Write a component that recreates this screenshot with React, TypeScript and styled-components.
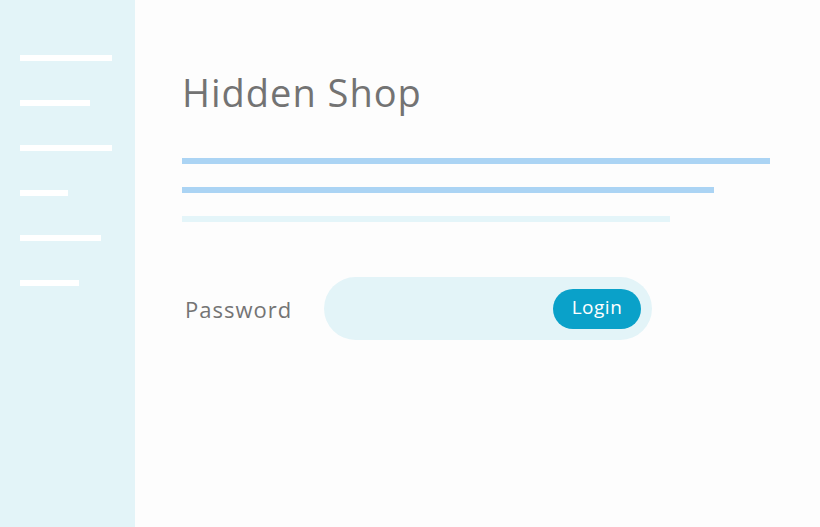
import React from "react";
import styled, { createGlobalStyle } from "styled-components";

const GlobalStyle = createGlobalStyle`
  html, body {
    margin: 0;
    padding: 0;
    background: #fdfdfd;
  }
  body {
    font-family: "Open Sans", "Liberation Sans", sans-serif;
  }
`;

const Page = styled.div`
  display: flex;
  width: 820px;
  height: 527px;
  overflow: hidden;
  background: #fdfdfd;
`;

const Sidebar = styled.nav`
  width: 135px;
  flex-shrink: 0;
  background: #e3f4f8;
  display: flex;
  flex-direction: column;
  gap: 39px;
  padding: 55px 0 0 20px;
  box-sizing: border-box;
`;

const NavLine = styled.div<{ $width: number }>`
  width: ${(p) => p.$width}px;
  height: 6px;
  background: #ffffff;
`;

const Main = styled.main`
  flex: 1;
  display: flex;
  flex-direction: column;
  padding: 66px 0 0 47px;
`;

const Title = styled.h1`
  margin: 0;
  font-size: 38px;
  line-height: 52px;
  font-weight: 400;
  letter-spacing: 1px;
  color: #737373;
`;

const TextBlock = styled.div`
  display: flex;
  flex-direction: column;
  gap: 23px;
  margin-top: 40px;
`;

const TextLine = styled.div<{ $width: number; $faint?: boolean }>`
  width: ${(p) => p.$width}px;
  height: 6px;
  background: ${(p) => (p.$faint ? "#e4f5f9" : "#abd4f4")};
`;

const LoginRow = styled.form`
  display: flex;
  align-items: center;
  margin-top: 55px;
`;

const Label = styled.label`
  width: 142px;
  box-sizing: border-box;
  padding-left: 3px;
  font-size: 22px;
  color: #747474;
  letter-spacing: 1px;
`;

const InputPill = styled.div`
  width: 328px;
  height: 63px;
  box-sizing: border-box;
  border-radius: 32px;
  background: #e3f4f8;
  display: flex;
  align-items: center;
  justify-content: flex-end;
  padding-right: 11px;
`;

const LoginButton = styled.button`
  width: 88px;
  height: 40px;
  border: none;
  border-radius: 20px;
  background: #0aa1c9;
  color: #ffffff;
  font-family: inherit;
  font-size: 19px;
  letter-spacing: 0.5px;
  padding: 0 0 3px;
  cursor: pointer;
`;

const navWidths = [92, 70, 92, 48, 81, 59];

export default function App() {
  return (
    <>
      <GlobalStyle />
      <Page>
        <Sidebar>
          {navWidths.map((w, i) => (
            <NavLine key={i} $width={w} />
          ))}
        </Sidebar>
        <Main>
          <Title>Hidden Shop</Title>
          <TextBlock>
            <TextLine $width={588} />
            <TextLine $width={532} />
            <TextLine $width={488} $faint />
          </TextBlock>
          <LoginRow onSubmit={(e) => e.preventDefault()}>
            <Label>Password</Label>
            <InputPill>
              <LoginButton type="submit">Login</LoginButton>
            </InputPill>
          </LoginRow>
        </Main>
      </Page>
    </>
  );
}
